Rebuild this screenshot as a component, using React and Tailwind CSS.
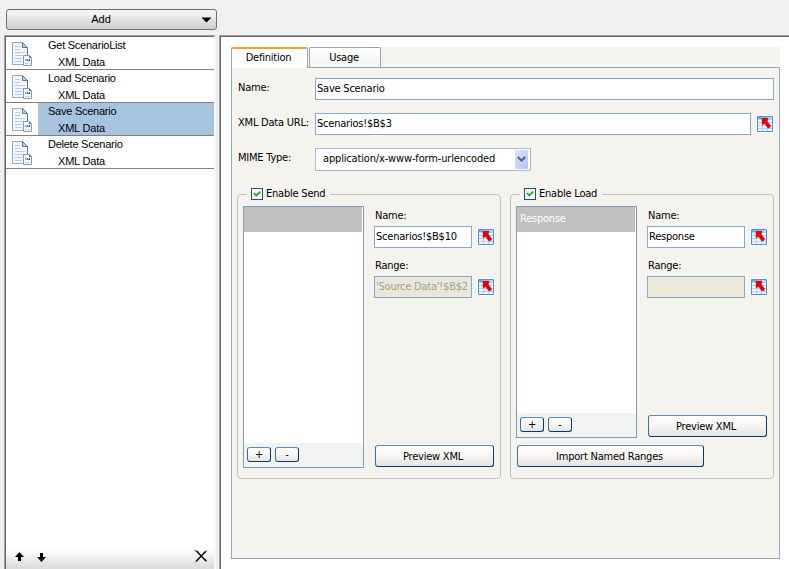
const connections = [
    { name: 'Get ScenarioList', type: 'XML Data' },
    { name: 'Load Scenario', type: 'XML Data' },
    { name: 'Save Scenario', type: 'XML Data', selected: true },
    { name: 'Delete Scenario', type: 'XML Data' },
];

function DocumentIcon() {
    return (
        <svg width="22" height="26" viewBox="0 0 22 26" className="shrink-0">
            <path d="M1.5 1.5h10l5 5v17h-15z" fill="#f3f7fd" stroke="#93a8cc" />
            <path d="M11.5 1.5v5h5z" fill="#c3d5e8" stroke="#5b7595" />
            <path d="M16.5 6.5v8" stroke="#5b7595" />
            <path
                d="M4 5.5h5M4 8.5h5M4 11.5h10M4 14.5h8M4 17.5h7M4 20.5h7"
                stroke="#bccbe4"
            />
            <path d="M12.5 14.5h6l2 2v8h-8z" fill="#f8fbff" stroke="#8398b5" />
            <path d="M18 15h1v1h1v1h-2z" fill="#5b7595" />
            <path d="M14 18h2v2h-2z" fill="#8abbe6" />
            <path d="M16 18h1v1h-1z" fill="#2f9a6a" />
            <path d="M16 19h2v1h-2z" fill="#4f86c6" />
            <path d="M18 18h1v2h-1z" fill="#23509e" />
            <path d="M14 22.5h5" stroke="#c5d0e2" />
        </svg>
    );
}

function RangeButton() {
    return (
        <button type="button" className="block w-[18px] h-[18px] shrink-0">
            <svg width="18" height="18" viewBox="0 0 18 18">
                <path d="M0 0h18v18h-18z" fill="#fff" />
                <path d="M1.5 1.5h15v15h-15z" fill="#eef5fd" stroke="#4a90e0" />
                <path d="M2 2h14v2h-14z" fill="#b5d5f7" />
                <path d="M2 2h4v2h-4z" fill="#6aaaf0" />
                <path
                    d="M2 4.5h14M2 7.5h14M2 10.5h14M2 13.5h14M6.5 4v12M11.5 2v14"
                    stroke="#b4d0f0"
                />
                <path
                    d="M6 3h6v1.500l-1 1.500 3.500 4.500v1.500l-1.500 1h-1.200l-3.300-4.500-1.500 1.200h-1z"
                    fill="#e80008"
                    stroke="#b51822"
                    strokeWidth=".4"
                />
            </svg>
        </button>
    );
}

function Checkbox() {
    return (
        <span className="w-3 h-3 border border-[#1c5180] bg-[#f6f6f3] shrink-0">
            <svg width="10" height="10" viewBox="0 0 10 10">
                <path d="M2 4l2.2 2.6L8.3 2.6" fill="none" stroke="#21a121" strokeWidth="1.7" />
            </svg>
        </span>
    );
}

function PushButton({ children, className }) {
    return (
        <button
            type="button"
            className={`border border-[#003c74] border-t-[#5f8bb0] border-l-[#3d6f9c] rounded-[3px] bg-linear-to-b from-white via-[#f6f5f3] to-[#e6e3e0] leading-none flex items-center justify-center ${className}`}
        >
            {children}
        </button>
    );
}

function ParamList({ label, className }) {
    return (
        <div className={`w-[121px] border border-[#7f9db9] bg-white flex flex-col ${className}`}>
            <div className="h-[25px] bg-[#c0c0c0] text-white pl-[3px] pt-[5px] leading-[14px] mr-px">
                {label}
            </div>
            <div className="flex-1" />
            <div className="h-6 bg-[#f1f3f3] pl-[3px] pt-[4px] flex gap-1">
                <PushButton className="w-6 h-[15px]">+</PushButton>
                <PushButton className="w-6 h-[15px]">-</PushButton>
            </div>
        </div>
    );
}

function ParamField({ label, value, disabled }) {
    return (
        <div>
            <div className="h-[14px] leading-[14px] ml-px">{label}</div>
            <div className="flex items-center mt-[3px] gap-[5px]">
                <div
                    className={`w-[98px] h-[22px] border border-[#86a9ca] pl-px pr-[2px] leading-[19px] ${
                        disabled ? 'bg-[#ebe8d8] text-[#a2a08f]' : 'bg-white'
                    }`}
                >
                    <div className="overflow-hidden whitespace-nowrap">{value}</div>
                </div>
                <RangeButton />
            </div>
        </div>
    );
}

function Group({ title, children }) {
    return (
        <section className="w-[264px] h-[285px] border border-[#c0c0c0] rounded-[4px]">
            <div className="flex items-center h-[14px] -mt-2 ml-[9px] pl-1 pr-[5px] w-fit bg-[#f4f3ee] gap-[3px] whitespace-nowrap">
                <Checkbox />
                <span className="leading-[14px]">{title}</span>
            </div>
            {children}
        </section>
    );
}

function Sidebar() {
    return (
        <aside className="w-[219px] pt-[9px] flex flex-col shrink-0 font-['Liberation_Sans',Arial,sans-serif] text-[11px]">
            <button
                type="button"
                className="ml-[6px] w-[211px] h-[21px] shrink-0 border border-[#707070] rounded-[3px] bg-linear-to-b from-[#f3f3f3] from-20% via-[#e2e2e2] via-50% to-[#cfcfcf] flex items-center pr-[4px] text-[11px]"
            >
                <span className="flex-1 text-center pr-[6px]">Add</span>
                <svg width="11" height="6" viewBox="0 0 11 6">
                    <path d="M.5 .5h10L5.5 5.5z" fill="#000" />
                </svg>
            </button>
            <div className="ml-1 mt-[5px] w-[212px] flex-1 flex flex-col border-t border-l border-[#a0a0a0] border-r-2 border-r-[#f8f8f8]">
                <div className="flex-1 flex flex-col border-t border-l border-[#696969] bg-white">
                    {connections.map((item) => (
                        <div key={item.name} className="flex h-[33px] border-b border-[#808080] shrink-0">
                            <div className="w-8 pl-[5px] pt-[4px]">
                                <DocumentIcon />
                            </div>
                            <div
                                className={`flex-1 pl-[10px] whitespace-nowrap ${item.selected ? 'bg-[#a8c3dd]' : ''}`}
                            >
                                <div className="leading-[17px] tracking-[-0.25px]">{item.name}</div>
                                <div className="leading-[16px] pl-[10px] tracking-[-0.2px]">{item.type}</div>
                            </div>
                        </div>
                    ))}
                    <div className="flex-1" />
                    <div className="h-5 bg-linear-to-b from-white to-[#dadada] flex items-start pl-[9px] pr-[6px]">
                        <svg width="9" height="9" viewBox="0 0 9 9" className="mt-[3px]">
                            <path d="M4.5 0L9 5H6v4H3V5H0z" fill="#000" />
                        </svg>
                        <svg width="9" height="9" viewBox="0 0 9 9" className="mt-[4px] ml-[13px]">
                            <path d="M4.5 9L0 4h3V0h3v4h3z" fill="#000" />
                        </svg>
                        <svg width="14" height="14" viewBox="0 0 14 14" className="ml-auto">
                            <path d="M.5 1.500l3 1M10 4l3-2.500M4 10l-2.500 3M11 10l2 2.500" stroke="#888" strokeWidth="1.500" />
                            <path d="M2.500 2L12 12M11.500 2.500L2.500 12" stroke="#111" strokeWidth="1.600" />
                        </svg>
                    </div>
                </div>
            </div>
        </aside>
    );
}

export default function App() {
    return (
        <div className="w-[789px] h-[569px] bg-[#f0f0f0] text-black flex overflow-hidden">
            <Sidebar />
            <main className="mt-[35px] flex-1 border-t border-l border-[#a0a0a0] flex font-['DejaVu_Sans_Condensed','DejaVu_Sans',sans-serif] text-[11px] tracking-[-0.22px]">
                <div className="flex-1 border-t border-l border-[#696969] bg-white pl-[10px] pt-[10px]">
                    <div className="w-[549px] h-[512px] bg-[#f4f3ee] flex flex-col">
                        <div className="flex h-5 shrink-0">
                            <div className="w-[77px] h-[21px] z-10 border-t-[2px] border-t-[#f0a030] border-x border-x-[#91a7b4] rounded-t-[2px] bg-white text-center leading-[18px] pr-[2px]">
                                Definition
                            </div>
                            <div className="ml-px w-[72px] h-5 border border-b-0 border-[#91a7b4] rounded-t-[2px] bg-linear-to-b from-white to-[#f2f2ef] text-center leading-[19px] pr-[2px]">
                                Usage
                            </div>
                        </div>
                        <div className="flex-1 border border-[#91a7b4]">
                            <div className="flex pt-[10px]">
                                <span className="w-[83px] pl-[6px] leading-[19px]">Name:</span>
                                <div className="w-[459px] h-[22px] border border-[#86a9ca] bg-white pl-px leading-[19px]">
                                    Save Scenario
                                </div>
                            </div>
                            <div className="flex h-[35px] pt-[13px]">
                                <span className="w-[83px] pl-[6px] leading-[19px] whitespace-nowrap">XML Data URL:</span>
                                <div className="w-[436px] h-[22px] border border-[#86a9ca] bg-white pl-px leading-[19px]">
                                    Scenarios!$B$3
                                </div>
                                <div className="ml-[5px] pt-[2px]">
                                    <RangeButton />
                                </div>
                            </div>
                            <div className="flex pt-[13px]">
                                <span className="w-[83px] pl-[6px] leading-[19px]">MIME Type:</span>
                                <div className="w-[216px] h-[23px] border border-[#a5bdd2] bg-white pl-[7px] pr-[2px] flex items-center justify-between">
                                    <span className="tracking-[-0.16px]">application/x-www-form-urlencoded</span>
                                    <span className="w-[13px] h-[19px] rounded-[1px] bg-linear-to-br from-[#dbe6fd] to-[#afc6f5] flex items-center justify-center">
                                        <svg width="9" height="7" viewBox="0 0 9 7">
                                            <path d="M.8 1L4.500 4.700L8.200 1" fill="none" stroke="#4d6185" strokeWidth="2" />
                                        </svg>
                                    </span>
                                </div>
                            </div>
                            <div className="flex pt-[23px] pl-[5px] gap-[9px]">
                                <Group title="Enable Send">
                                    <div className="flex pl-[5px] pt-[5px]">
                                        <ParamList label="" className="h-[262px]" />
                                        <div className="ml-[10px] pt-[3px] flex flex-col">
                                            <ParamField label="Name:" value="Scenarios!$B$10" />
                                            <div className="h-[11px]" />
                                            <ParamField label="Range:" value="'Source Data'!$B$2" disabled />
                                            <PushButton className="w-[119px] h-[22px] mt-auto mb-px ml-px pr-[3px]">
                                                Preview XML
                                            </PushButton>
                                        </div>
                                    </div>
                                </Group>
                                <Group title="Enable Load">
                                    <div className="flex pl-[5px] pt-[5px]">
                                        <ParamList label="Response" className="h-[232px]" />
                                        <div className="ml-[10px] pt-[3px] flex flex-col">
                                            <ParamField label="Name:" value="Response" />
                                            <div className="h-[11px]" />
                                            <ParamField label="Range:" value="" disabled />
                                            <PushButton className="w-[119px] h-[22px] mt-auto mb-px ml-px pr-[3px]">
                                                Preview XML
                                            </PushButton>
                                        </div>
                                    </div>
                                    <PushButton className="w-[187px] h-[22px] ml-[6px] mt-[7px] pr-[2px]">
                                        Import Named Ranges
                                    </PushButton>
                                </Group>
                            </div>
                        </div>
                    </div>
                </div>
            </main>
        </div>
    );
}
